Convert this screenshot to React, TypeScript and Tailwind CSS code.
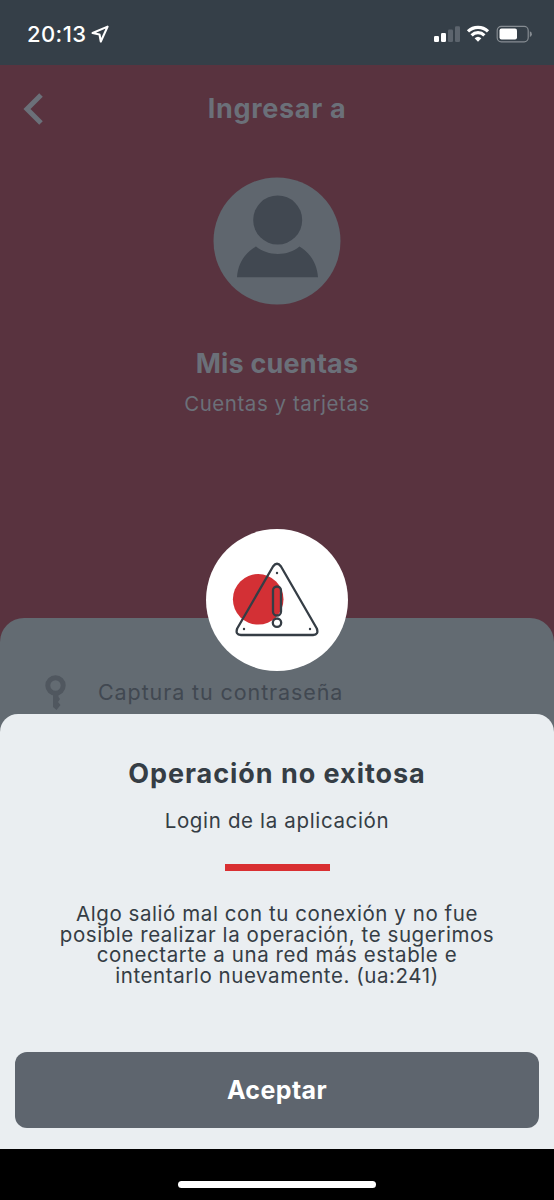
function StatusBar() {
  return (
    <header className="flex h-[65px] items-center justify-between bg-[#353f48] pr-[22px] pl-[27px] text-white">
      <div className="flex items-center gap-[4px] pt-[3px]">
        <span className="w-[60px] text-[22px] leading-[26px] font-medium tracking-[0.4px] whitespace-nowrap">
          20:13
        </span>
        <svg width="18" height="18" viewBox="0 0 18 18" fill="none">
          <path
            d="M16.6 1.6 L1.6 8 L8.5 9.5 L9.8 16.5 Z"
            stroke="currentColor"
            strokeWidth="2.1"
            strokeLinejoin="round"
          />
        </svg>
      </div>

      <svg width="100" height="20" viewBox="0 0 100 20" className="mt-[4px]">
        {/* Signal */}
        <rect x="2" y="11" width="5" height="6" rx="1.2" fill="#fff" />
        <rect x="9" y="8" width="5" height="9" rx="1.2" fill="#fff" />
        <rect x="16" y="4.5" width="5" height="12.5" rx="1.2" fill="#5c646d" />
        <rect x="23" y="1.3" width="5" height="15.7" rx="1.2" fill="#5c646d" />
        {/* Wi-Fi */}
        <g fill="none" stroke="#fff" strokeWidth="3.2">
          <path d="M36 6.3 A14.5 14.5 0 0 1 56 6.3" />
          <path d="M39.6 10.3 A9.2 9.2 0 0 1 52.4 10.3" />
        </g>
        <path d="M46 16.8 L42.6 13.3 A5 5 0 0 1 49.4 13.3 Z" fill="#fff" />
        {/* Battery */}
        <rect x="65.2" y="1.4" width="31" height="15.4" rx="4" fill="none" stroke="#868c92" strokeWidth="1.2" />
        <rect x="67.5" y="3.6" width="17.5" height="11" rx="2" fill="#fff" />
        <path d="M97.8 6.3 A3 3 0 0 1 97.8 12 Z" fill="#868c92" />
      </svg>
    </header>
  );
}

function Avatar() {
  return (
    <svg width="128" height="128" viewBox="0 0 128 128">
      <circle cx="64" cy="64" r="63.5" fill="#5f666e" />
      <circle cx="64.7" cy="43" r="24.5" fill="#414851" />
      <path d="M24 100.3 C25 86 32 76 43 69.6 C55 79.5 75 79.5 86.5 69.6 C97 76 104 86 105 100.3 Z" fill="#414851" />
    </svg>
  );
}

function WarningBadge() {
  return (
    <div className="absolute top-[529px] left-[206px] size-[142px] rounded-full bg-white">
      <svg width="142" height="142" viewBox="0 0 142 142">
        <circle cx="52.2" cy="70.3" r="25.3" fill="#d33035" />
        <g fill="none" stroke="#353d45" strokeWidth="2.3" strokeLinejoin="round">
          <path d="M67 37.5 Q71 32 75 37.5 L110.8 99.5 Q113 105.8 107 106 L35 106 Q29 105.8 31.2 99.5 Z" />
          <rect x="67" y="57.5" width="8" height="29" rx="4" />
          <circle cx="71" cy="93.7" r="4.2" />
        </g>
        <g fill="#353d45">
          <circle cx="71" cy="44" r="1.2" />
          <circle cx="38" cy="100" r="1.2" />
          <circle cx="104" cy="100" r="1.2" />
        </g>
      </svg>
    </div>
  );
}

export default function App() {
  return (
    <div className="relative flex h-[1200px] w-[554px] flex-col overflow-hidden bg-[#59333f] font-['Inter','Liberation_Sans',sans-serif]">
      <StatusBar />

      <main className="flex h-[553px] flex-col items-center text-[#6b7079]">
        <div className="grid h-[88px] w-full grid-cols-[60px_1fr_60px] items-center">
          <svg width="22" height="34" viewBox="0 0 22 34" className="ml-[23px]" fill="none">
            <path d="M18 3 L4 17 L18 31" stroke="#6b7079" strokeWidth="5" />
          </svg>
          <h1 className="text-center text-[27px] leading-8 font-bold tracking-[0.7px]">Ingresar a</h1>
        </div>
        <div className="mt-6">
          <Avatar />
        </div>
        <h2 className="mt-[43px] text-[27px] leading-8 font-bold tracking-[0.2px]">Mis cuentas</h2>
        <p className="mt-[12px] text-[20.5px] leading-6 tracking-[0.55px]">Cuentas y tarjetas</p>
      </main>

      {/* Password field, dimmed behind the sheet */}
      <section className="h-[126px] shrink-0 rounded-t-[24px] bg-[#636b72] pt-[56px]">
        <div className="flex items-start pl-[45px]">
          <svg width="22" height="38" viewBox="0 0 22 38" fill="none">
            <circle cx="10.5" cy="11.5" r="7.7" stroke="#50575f" strokeWidth="5" />
            <path d="M8 20 H13.5 V23 L15 25 L13 28 L15.5 31 L11.5 36 L8 33 Z" fill="#50575f" />
          </svg>
          <span className="mt-[6px] ml-[31px] text-[21.5px] leading-6 tracking-[0.9px] text-[#414851]">
            Captura tu contraseña
          </span>
        </div>
      </section>

      <section
        role="dialog"
        className="-mt-[30px] flex h-[435px] shrink-0 flex-col items-center rounded-t-[18px] bg-[#eaeef1] text-[#353d45]"
      >
        <h2 className="mt-[44px] text-[27px] leading-8 font-bold tracking-[0.95px]">Operación no exitosa</h2>
        <p className="mt-[19px] text-[20.5px] leading-6 tracking-[0.65px]">Login de la aplicación</p>
        <div className="mt-[31px] h-[7px] w-[105px] bg-[#d92f32]" />
        <p className="mt-[33px] text-center text-[20.5px] leading-[20.7px] tracking-[0.57px]">
          Algo salió mal con tu conexión y no fue
          <br />
          posible realizar la operación, te sugerimos
          <br />
          conectarte a una red más estable e
          <br />
          intentarlo nuevamente. (ua:241)
        </p>
        <button className="mt-auto mb-[21px] h-[76px] w-[524px] rounded-[12px] bg-[#5e656e] pt-[2px] text-[25px] font-bold tracking-[0.4px] text-white">
          Aceptar
        </button>
      </section>

      <footer className="flex flex-1 items-end justify-center bg-black pb-[12px]">
        <div className="h-[7.5px] w-[198px] rounded-full bg-white" />
      </footer>

      <WarningBadge />
    </div>
  );
}
